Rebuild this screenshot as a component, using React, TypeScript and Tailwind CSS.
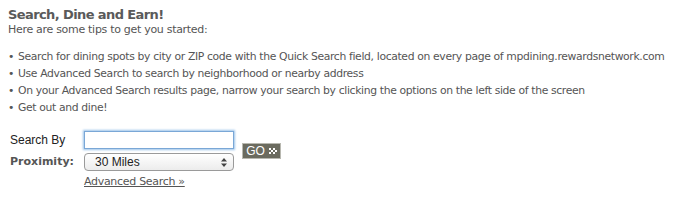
import React from 'react';

const tips = [
  'Search for dining spots by city or ZIP code with the Quick Search field, located on every page of mpdining.rewardsnetwork.com',
  'Use Advanced Search to search by neighborhood or nearby address',
  'On your Advanced Search results page, narrow your search by clicking the options on the left side of the screen',
  'Get out and dine!',
];

const App: React.FC = () => {
  return (
    <div className="w-[683px] h-[200px] bg-white text-[#555] text-[11px] leading-[17px] tracking-[-0.3px] font-['DejaVu_Sans',Verdana,sans-serif] pt-[7px] px-[8px]">
      {/* Intro */}
      <h2 className="text-[13px] leading-[16px] font-bold text-[#5a5a5a] tracking-[-0.6px]">Search, Dine and Earn!</h2>
      <p className="leading-[13px]">Here are some tips to get you started:</p>

      <ul className="mt-[12px] whitespace-nowrap text-[10.8px] tracking-[-0.35px]">
        {tips.map((tip, i) => (
          <li key={i} className="flex items-start">
            <span className="w-[10px] shrink-0">•</span>
            <span>{tip}</span>
          </li>
        ))}
      </ul>

      {/* Search form */}
      <div className="mt-[15px] flex items-start pl-[2px] tracking-normal">
        <div className="flex flex-col w-[74px] font-['Liberation_Sans',Arial,sans-serif] text-[12px]">
          <span className="h-[21px] pt-[1px] text-[#222]">Search By</span>
          <span className="h-[21px] pt-[1px] font-bold text-[#555] font-['DejaVu_Sans',Verdana,sans-serif] text-[11px]">Proximity:</span>
        </div>
        <div className="flex flex-col w-[150px]">
          <input
            type="text"
            className="h-[18px] w-[150px] bg-white border border-[#7aa7d6] outline-none shadow-[0_0_2px_1px_#9cc3ea]"
          />
          <div className="mt-[4px] h-[18px] w-[150px] rounded-[4px] border border-[#9a9a9a] bg-gradient-to-b from-white to-[#ececec] flex items-center justify-between pl-[10px] pr-[6px] text-[#222] font-['Liberation_Sans',Arial,sans-serif] text-[12px]">
            <span>30 Miles</span>
            <svg width="6" height="9" viewBox="0 0 6 9">
              <path d="M3 0 L6 3.5 H0 Z M3 9 L6 5.5 H0 Z" fill="#444" />
            </svg>
          </div>
          <a href="#" className="mt-[4px] text-[#555] underline leading-[14px] tracking-[-0.3px]">Advanced Search »</a>
        </div>
        <button className="ml-[8px] mt-[12px] h-[16px] w-[39px] justify-center bg-[#6b6b5f] border border-[#b8b8b0] text-white font-['Liberation_Sans',Arial,sans-serif] text-[12px] leading-[14px] flex items-center gap-[4px]">
          GO
          <svg width="8" height="6" viewBox="0 0 8 6">
            <path d="M0 0h2v2H0zM2 2h2v2H2zM0 4h2v2H0zM4 0h2v2H4zM6 2h2v2H6zM4 4h2v2H4z" fill="#fff" />
          </svg>
        </button>
      </div>
    </div>
  );
};

export default App;
